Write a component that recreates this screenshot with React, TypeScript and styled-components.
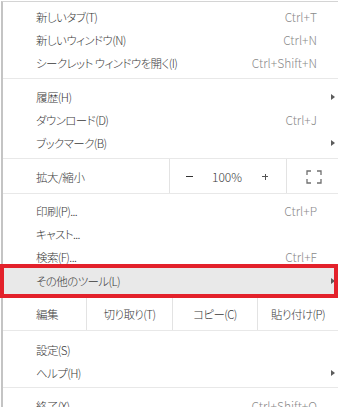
import styled, { createGlobalStyle } from "styled-components";

const GlobalStyle = createGlobalStyle`
  html, body {
    margin: 0;
    padding: 0;
    background: #ffffff;
  }
  body {
    width: 338px;
    height: 407px;
    overflow: hidden;
    font-family: "Noto Sans CJK JP", "Noto Sans", sans-serif;
    font-size: 12px;
    font-weight: 300;
    color: #3a3a3a;
    font-feature-settings: "palt";
  }
`;

type ItemProps = {
  label: string;
  shortcut?: string;
  submenu?: boolean;
};

const MenuItem = ({ label, shortcut, submenu }: ItemProps) => {
  return (
    <Item>
      <Label>{label}</Label>
      {shortcut && <Shortcut>{shortcut}</Shortcut>}
      <Trail>{submenu && <Arrow />}</Trail>
    </Item>
  );
};

const FullscreenIcon = () => (
  <svg width="16" height="14" viewBox="0 0 16 14" fill="none" stroke="#707070" strokeWidth="1.3">
    <path d="M1 5V1h4" />
    <path d="M11 1h4v4" />
    <path d="M15 9v4h-4" />
    <path d="M5 13H1V9" />
  </svg>
);

const App = () => {
  return (
    <>
      <GlobalStyle />
      <Menu>
        <MenuItem label="新しいタブ(T)" shortcut="Ctrl+T" />
        <MenuItem label="新しいウィンドウ(N)" shortcut="Ctrl+N" />
        <MenuItem label="シークレット ウィンドウを開く(I)" shortcut="Ctrl+Shift+N" />
        <Separator />
        <MenuItem label="履歴(H)" submenu />
        <MenuItem label="ダウンロード(D)" shortcut="Ctrl+J" />
        <MenuItem label="ブックマーク(B)" submenu />
        <ZoomRow>
          <ZoomLabel>拡大/縮小</ZoomLabel>
          <ZoomControls>
            <Minus />
            <ZoomValue>100%</ZoomValue>
            <Plus aria-label="+" />
          </ZoomControls>
          <FullscreenCell>
            <FullscreenIcon />
          </FullscreenCell>
        </ZoomRow>
        <MenuItem label="印刷(P)..." shortcut="Ctrl+P" />
        <MenuItem label="キャスト..." />
        <MenuItem label="検索(F)..." shortcut="Ctrl+F" />
        <Highlighted>
          <MenuItem label="その他のツール(L)" submenu />
        </Highlighted>
        <EditRow>
          <EditLabel>編集</EditLabel>
          <EditCell>切り取り(T)</EditCell>
          <EditCell>コピー(C)</EditCell>
          <EditCell>貼り付け(P)</EditCell>
        </EditRow>
        <MenuItem label="設定(S)" />
        <MenuItem label="ヘルプ(H)" submenu />
        <Separator $top={3} />
        <MenuItem label="終了(X)" shortcut="Ctrl+Shift+Q" />
      </Menu>
    </>
  );
};

export default App;

const Menu = styled.div`
  margin-top: 1px;
  margin-left: 1px;
  border-top: 1px solid #d4d4d4;
  border-left: 2px solid #c4c4c4;
  padding-top: 3px;
  background: #ffffff;
`;

const Item = styled.div`
  display: flex;
  align-items: center;
  height: 23px;
  padding-left: 33px;
  white-space: nowrap;
`;

const Label = styled.span`
  flex: 1;
  color: #3a3a3a;
  font-size: 11.5px;
  letter-spacing: -0.6px;
`;

const Shortcut = styled.span`
  color: #8a8a8a;
`;

const Trail = styled.span`
  width: 21px;
  display: flex;
  justify-content: flex-end;
  padding-right: 3px;
  box-sizing: border-box;
`;

const Arrow = styled.span`
  width: 0;
  height: 0;
  border-left: 4px solid #5c5c5c;
  border-top: 3.5px solid transparent;
  border-bottom: 3.5px solid transparent;
`;

const Separator = styled.div<{ $top?: number }>`
  height: 1px;
  background: #e8e8e8;
  margin: ${(p) => p.$top ?? 4}px 0 6px;
`;

const ZoomRow = styled.div`
  display: grid;
  grid-template-columns: 166px 118px 1fr;
  height: 34px;
  margin: 4px 0 5px;
  border-top: 1px solid #e8e8e8;
  border-bottom: 1px solid #e8e8e8;
`;

const ZoomLabel = styled.div`
  display: flex;
  align-items: center;
  padding-left: 33px;
  padding-top: 2px;
  font-size: 11.5px;
  letter-spacing: -0.4px;
`;

const ZoomControls = styled.div`
  display: grid;
  grid-template-columns: 38px 38px 38px;
  align-items: center;
  justify-items: center;
  border-left: 1px solid #e3e3e3;
  border-right: 1px solid #e3e3e3;
  padding-top: 1px;
`;

const Minus = styled.span`
  width: 7px;
  height: 1px;
  background: #333333;
`;

const ZoomValue = styled.span`
  color: #3a3a3a;
`;

const Plus = styled.span`
  position: relative;
  width: 6px;
  height: 6px;
  &::before,
  &::after {
    content: "";
    position: absolute;
    background: #555555;
  }
  &::before {
    left: 0;
    right: 0;
    top: 2.5px;
    height: 1px;
  }
  &::after {
    top: 0;
    bottom: 0;
    left: 2.5px;
    width: 1px;
  }
`;

const FullscreenCell = styled.div`
  display: flex;
  align-items: center;
  justify-content: center;
  padding-left: 2px;
  padding-top: 1px;
`;

const Highlighted = styled.div`
  position: relative;
  background: #e9e9e9;
  & > div {
    height: 26px;
  }
  &::after {
    content: "";
    position: absolute;
    left: -3px;
    right: 0;
    top: -4px;
    bottom: -4px;
    border: 4px solid #e3212b;
    pointer-events: none;
  }
`;

const EditRow = styled.div`
  display: grid;
  grid-template-columns: 83px 86px 85px 1fr;
  height: 32px;
  margin-top: 4px;
  margin-bottom: 7px;
  border-bottom: 1px solid #e8e8e8;
`;

const EditLabel = styled.div`
  display: flex;
  align-items: center;
  padding-left: 33px;
  font-size: 11.5px;
  letter-spacing: -0.4px;
`;

const EditCell = styled.div`
  display: flex;
  align-items: center;
  justify-content: center;
  border-left: 1px solid #e3e3e3;
  white-space: nowrap;
  font-size: 11.5px;
  letter-spacing: -0.6px;
`;
